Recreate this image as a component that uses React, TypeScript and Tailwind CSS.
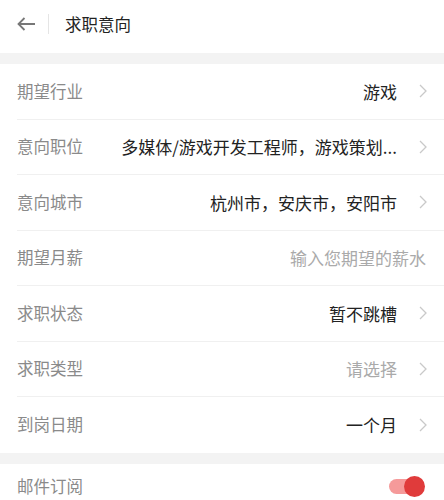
import React from "react";

const rows: { label: string; value: string; placeholder?: boolean; chevron: boolean }[] = [
  { label: "期望行业", value: "游戏", chevron: true },
  { label: "意向职位", value: "多媒体/游戏开发工程师，游戏策划...", chevron: true },
  { label: "意向城市", value: "杭州市，安庆市，安阳市", chevron: true },
  { label: "期望月薪", value: "输入您期望的薪水", placeholder: true, chevron: false },
  { label: "求职状态", value: "暂不跳槽", chevron: true },
  { label: "求职类型", value: "请选择", placeholder: true, chevron: true },
  { label: "到岗日期", value: "一个月", chevron: true },
];

function Chevron() {
  return (
    <svg width="10" height="16" viewBox="0 0 10 16" className="ml-[21px] shrink-0">
      <path d="M2 2 L8 8 L2 14" fill="none" stroke="#c9c9c9" strokeWidth="1.3" />
    </svg>
  );
}

export default function App() {
  return (
    <div
      className="w-[444px] h-[500px] overflow-hidden bg-white"
      style={{ fontFamily: '"Noto Sans CJK SC", "Noto Sans", sans-serif' }}
    >
      <div className="h-[53px] flex items-center pl-[17px] pb-[5px]">
        <svg width="19" height="14" viewBox="0 0 19 14">
          <path d="M1.5 7 H18 M7.5 1 L1.5 7 L7.5 13" fill="none" stroke="#777" strokeWidth="1.8" />
        </svg>
        <div className="w-px h-[20px] bg-[#e5e5e5] ml-[12px]" />
        <div className="ml-[16px] text-[16.5px] text-[#222]">求职意向</div>
      </div>
      <div className="h-[11px] bg-[#f3f3f3]" />
      <div>
        {rows.map((r, i) => (
          <div key={r.label} className="pl-[17px]">
            <div
              className={`h-[55.5px] flex items-center pr-[16px] ${
                i < rows.length - 1 ? "border-b border-[#f0f0f0]" : ""
              }`}
            >
              <div className="text-[16.5px] text-[#8a8a8a] shrink-0">{r.label}</div>
              <div
                className={`flex-1 text-right text-[17px] truncate ml-[20px] ${
                  r.placeholder ? "text-[#aaaaaa]" : "text-[#222]"
                } ${r.chevron ? "" : "pr-[2px]"}`}
              >
                {r.value}
              </div>
              {r.chevron && <Chevron />}
            </div>
          </div>
        ))}
      </div>
      <div className="h-[11px] bg-[#f3f3f3]" />
      <div className="h-[45px] flex items-center pl-[17px] pr-[19px]">
        <div className="text-[16.5px] text-[#8a8a8a]">邮件订阅</div>
        <div className="flex-1" />
        <div className="relative w-[36px] h-[22px] flex items-center">
          <div className="absolute left-0 right-[4px] h-[15px] rounded-full bg-[#f59a9a]" />
          <div className="absolute right-0 w-[21px] h-[21px] rounded-full bg-[#e03b3b]" />
        </div>
      </div>
    </div>
  );
}
